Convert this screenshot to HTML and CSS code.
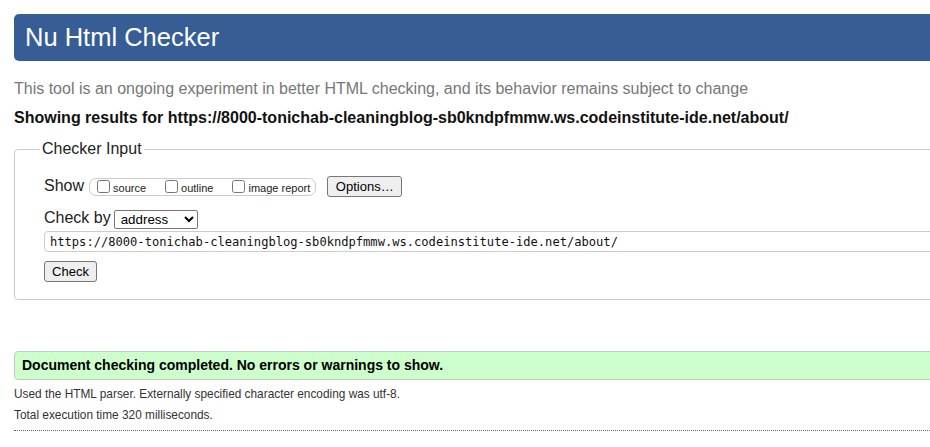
FILE: index.html
```html
<!DOCTYPE html>
<html lang="en">
<head>
<meta charset="utf-8">
<title>Nu Html Checker</title>
<link rel="stylesheet" href="styles.css">
</head>
<body>
<div class="page">
  <h1 class="banner">Nu Html Checker</h1>
  <p class="tagline">This tool is an ongoing experiment in better HTML checking, and its behavior remains subject to change</p>
  <p class="results-for">Showing results for https://8000-tonichab-cleaningblog-sb0kndpfmmw.ws.codeinstitute-ide.net/about/</p>
  <form class="checker-form">
    <fieldset class="checker">
      <legend class="checker-legend">Checker Input</legend>
      <div class="row show-row">
        <span class="lbl">Show</span>
        <span class="opts">
          <label class="opt"><input type="checkbox" class="cb">source</label>
          <label class="opt"><input type="checkbox" class="cb">outline</label>
          <label class="opt"><input type="checkbox" class="cb">image report</label>
        </span>
        <button type="button" class="btn btn-options">Options…</button>
      </div>
      <div class="row checkby-row">
        <span class="lbl">Check by</span>
        <select class="sel"><option>address</option></select>
      </div>
      <input type="text" class="url" value="https://8000-tonichab-cleaningblog-sb0kndpfmmw.ws.codeinstitute-ide.net/about/">
      <button type="button" class="btn btn-check">Check</button>
    </fieldset>
  </form>
  <p class="success">Document checking completed. No errors or warnings to show.</p>
  <p class="details">Used the HTML parser. Externally specified character encoding was utf-8.</p>
  <p class="details">Total execution time 320 milliseconds.</p>
  <hr class="dots">
</div>
</body>
</html>
```
FILE: styles.css
```css
html {
  overflow: hidden;
  background: #fff;
}
body {
  margin: 0;
  font-family: "Liberation Sans", Arial, sans-serif;
  color: #222;
}
.page {
  width: 1100px;
  padding: 14px;
}
.banner {
  margin: 0;
  height: 47px;
  line-height: 47px;
  padding-left: 11px;
  background: #365d95;
  color: #fff;
  font-size: 25.5px;
  font-weight: normal;
  border-radius: 5px 0 0 5px;
}
.tagline {
  margin: 18px 0 0;
  font-size: 16px;
  line-height: 20px;
  color: #777;
}
.results-for {
  margin: 9px 0 0;
  font-size: 16px;
  line-height: 20px;
  font-weight: bold;
  color: #111;
}
.checker-form {
  margin: 12px 0 0;
}
.checker {
  margin: 0;
  border: 1px solid #ccc;
  border-radius: 4px;
  padding: 18px 0 17px 29px;
  min-width: 0;
}
.checker-legend {
  font-size: 16px;
  line-height: 18px;
  padding: 0 2px;
  margin-left: -4px;
  color: #222;
}
.row {
  display: flex;
  align-items: center;
}
.show-row {
  height: 21px;
}
.checkby-row {
  height: 20px;
  margin-top: 12px;
}
.lbl {
  font-size: 16px;
  line-height: 18px;
  padding-bottom: 2px;
}
.opts {
  display: inline-flex;
  align-items: center;
  height: 16px;
  margin-left: 5px;
  padding: 0 5px 0 7px;
  border: 1px solid #ccc;
  border-radius: 7px;
}
.opt {
  display: inline-flex;
  align-items: center;
  font-size: 11px;
  line-height: 14px;
  padding-top: 2px;
}
.opt + .opt {
  margin-left: 19px;
}
.cb {
  width: 13px;
  height: 13px;
  margin: -3px 3px 0 0;
}
.btn {
  font-family: "Liberation Sans", Arial, sans-serif;
  font-size: 13px;
  height: 21px;
  padding: 0;
  background: #efefef;
  border: 1px solid #767676;
  border-radius: 3px;
  color: #000;
}
.btn-options {
  width: 75px;
  margin-left: 11px;
}
.sel {
  font-family: "Liberation Sans", Arial, sans-serif;
  font-size: 13.33px;
  width: 84px;
  height: 19px;
  margin-left: 3px;
  padding: 0 0 0 2px;
  border: 1px solid #767676;
  border-radius: 2px;
  background: #fff;
  color: #000;
}
.url {
  display: block;
  box-sizing: border-box;
  width: 1060px;
  height: 21px;
  margin: 2px 0 0;
  padding: 0 5px;
  border: 1px solid #ccc;
  border-radius: 4px 0 0 4px;
  font-family: "DejaVu Sans Mono", "Liberation Mono", monospace;
  font-size: 12.1px;
  color: #111;
}
.btn-check {
  display: block;
  width: 53px;
  margin-top: 9px;
}
.success {
  margin: 51px 0 0;
  height: 27px;
  line-height: 27px;
  padding-left: 7px;
  background: #ccffcc;
  border: 1px solid #c2cbc2;
  border-radius: 4px 0 0 4px;
  font-size: 14px;
  font-weight: bold;
  color: #000;
}
.details {
  margin: 0;
  font-size: 11.85px;
  line-height: 21px;
  color: #333;
}
.success + .details {
  margin-top: 4px;
}
.dots {
  margin: 4px 0 0;
  border: 0;
  border-top: 1px dotted #666;
  height: 0;
}
```
